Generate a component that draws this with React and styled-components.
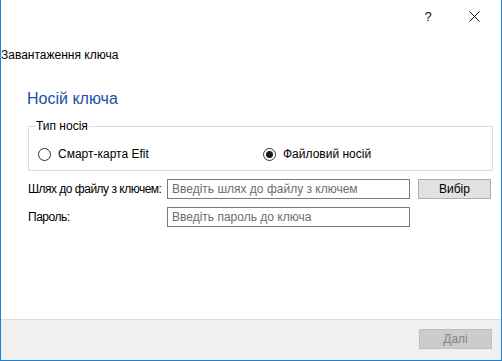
import React from "react";
import styled, { createGlobalStyle } from "styled-components";

const GlobalStyle = createGlobalStyle`
  html, body { margin: 0; padding: 0; background: #fff; }
  body { font-family: "Liberation Sans", Arial, sans-serif; font-size: 12px; color: #000; }
  * { box-sizing: border-box; }
`;

const Window = styled.div`
  width: 502px;
  height: 361px;
  display: flex;
  flex-direction: column;
  background: #fff;
  border: 1px solid #1883d7;
  border-top: none;
`;

const TitleBar = styled.div`
  height: 32px;
  display: flex;
  justify-content: flex-end;
  align-items: center;
  padding-right: 4px;
`;

const TitleButton = styled.div`
  width: 46px;
  height: 30px;
  display: flex;
  align-items: center;
  justify-content: center;
  font-size: 13px;
  color: #111;
`;

const Caption = styled.div`
  margin-top: 16px;
  line-height: 14px;
  height: 14px;
  white-space: nowrap;
`;

const Content = styled.div`
  padding: 0 8px 0 27px;
`;

const Heading = styled.h1`
  margin: 26px 0 9px -1px;
  font-size: 16px;
  font-weight: normal;
  line-height: 22px;
  color: #1a4ea6;
`;

const GroupBox = styled.fieldset`
  margin: 0;
  padding: 13px 9px 0 9px;
  border: 1px solid #dcdcdc;
  display: grid;
  grid-template-columns: 225px 1fr;
  align-content: start;
  height: 52px;
`;

const Legend = styled.legend`
  padding: 0 1px;
  margin-left: -3px;
  line-height: 14px;
`;

const RadioLabel = styled.label`
  display: flex;
  align-items: center;
  gap: 7px;
  height: 16px;
`;

const RadioCircle = styled.span`
  width: 13px;
  height: 13px;
  border-radius: 50%;
  border: 1px solid #333;
  display: flex;
  align-items: center;
  justify-content: center;
  background: #fff;
  &::after {
    content: "";
    width: 7px;
    height: 7px;
    border-radius: 50%;
    background: ${({ checked }) => (checked ? "#1a1a1a" : "transparent")};
  }
`;

const Row = styled.div`
  display: flex;
  align-items: center;
  margin-top: ${({ top }) => top}px;
`;

const FieldLabel = styled.span`
  width: 139px;
  white-space: nowrap;
  letter-spacing: -0.5px;
`;

const Input = styled.input`
  width: 243px;
  height: 20px;
  border: 1px solid #7a7a7a;
  padding: 0 4px 1px;
  font-family: inherit;
  font-size: 12px;
  outline: none;
  &::placeholder { color: #6d6d6d; }
`;

const Button = styled.button`
  width: 73px;
  height: 20px;
  margin-left: 8px;
  border: 1px solid ${({ disabled }) => (disabled ? "#bfbfbf" : "#adadad")};
  background: ${({ disabled }) => (disabled ? "#cccccc" : "#e1e1e1")};
  color: ${({ disabled }) => (disabled ? "#838383" : "#000")};
  font-family: inherit;
  font-size: 12px;
  padding: 0 0 1px;
`;

const Spacer = styled.div`
  flex: 1;
`;

const Footer = styled.div`
  height: 41px;
  border-top: 1px solid #dcdcdc;
  background: #f0f0f0;
  display: flex;
  justify-content: flex-end;
  align-items: flex-start;
  padding: 9px 9px 0 0;
`;

const Radio = ({ checked, children }) => (
  <RadioLabel>
    <RadioCircle checked={checked} />
    {children}
  </RadioLabel>
);

const App = () => {
  return (
    <>
      <GlobalStyle />
      <Window>
        <TitleBar>
          <TitleButton>?</TitleButton>
          <TitleButton>
            <svg width="11" height="11" viewBox="0 0 11 11">
              <path d="M0.5 0.5 L10.5 10.5 M10.5 0.5 L0.5 10.5" stroke="#111" strokeWidth="1" />
            </svg>
          </TitleButton>
        </TitleBar>
        <Caption>Завантаження ключа</Caption>
        <Content>
          <Heading>Носій ключа</Heading>
          <GroupBox>
            <Legend>Тип носія</Legend>
            <Radio>Смарт-карта Efit</Radio>
            <Radio checked>Файловий носій</Radio>
          </GroupBox>
          <Row top={8}>
            <FieldLabel>Шлях до файлу з ключем:</FieldLabel>
            <Input placeholder="Введіть шлях до файлу з ключем" />
            <Button>Вибір</Button>
          </Row>
          <Row top={8}>
            <FieldLabel>Пароль:</FieldLabel>
            <Input type="password" placeholder="Введіть пароль до ключа" />
          </Row>
        </Content>
        <Spacer />
        <Footer>
          <Button disabled>Далі</Button>
        </Footer>
      </Window>
    </>
  );
};

export default App;
